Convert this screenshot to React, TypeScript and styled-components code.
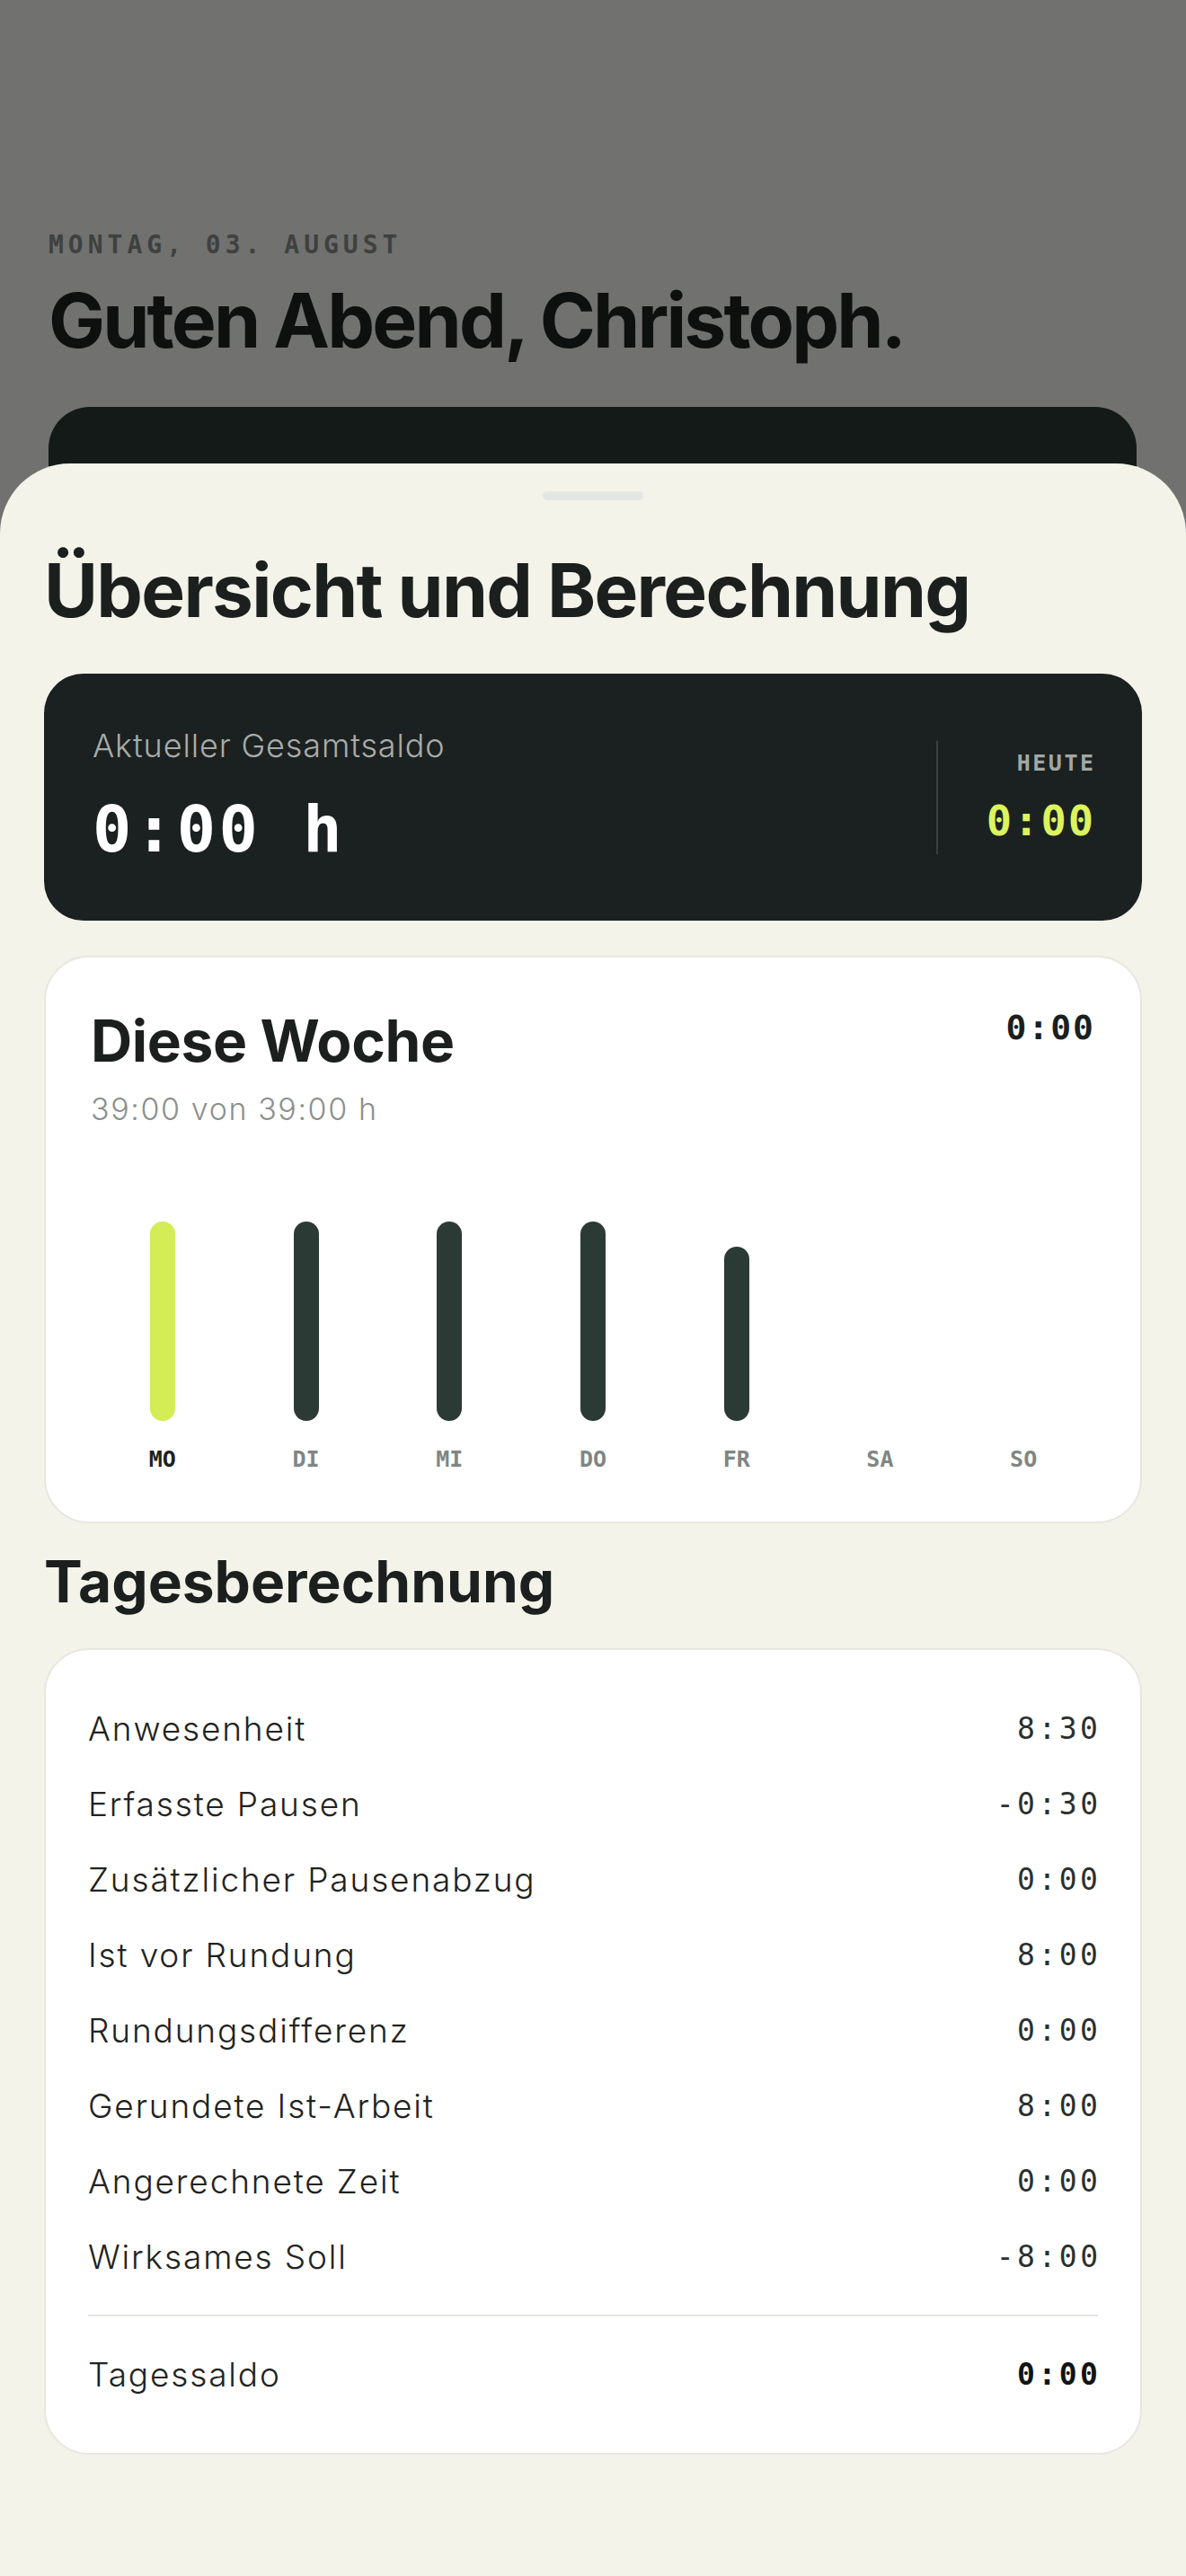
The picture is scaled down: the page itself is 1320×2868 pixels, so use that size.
import React from 'react';
import styled, {createGlobalStyle} from 'styled-components';

const GlobalStyle = createGlobalStyle`
  html, body {
    margin: 0;
    padding: 0;
  }
  body {
    background: #717170;
    font-family: Inter, "Noto Sans", sans-serif;
  }
  * {
    box-sizing: border-box;
  }
`;

const MONO = `"DejaVu Sans Mono", "Liberation Mono", monospace`;

type Day = { label: string, hours: number, today?: boolean };

const week: Day[] = [
    {label: 'MO', hours: 8, today: true},
    {label: 'DI', hours: 8},
    {label: 'MI', hours: 8},
    {label: 'DO', hours: 8},
    {label: 'FR', hours: 7},
    {label: 'SA', hours: 0},
    {label: 'SO', hours: 0},
];

const rows = [
    {label: 'Anwesenheit', value: '8:30'},
    {label: 'Erfasste Pausen', value: '-0:30'},
    {label: 'Zusätzlicher Pausenabzug', value: '0:00'},
    {label: 'Ist vor Rundung', value: '8:00'},
    {label: 'Rundungsdifferenz', value: '0:00'},
    {label: 'Gerundete Ist-Arbeit', value: '8:00'},
    {label: 'Angerechnete Zeit', value: '0:00'},
    {label: 'Wirksames Soll', value: '-8:00'},
];

const MAX_BAR = 222;

export default function App() {
    return (
        <>
            <GlobalStyle/>
            <Screen>
                <Backdrop>
                    <DateLabel>MONTAG, 03. AUGUST</DateLabel>
                    <Greeting>Guten Abend, Christoph.</Greeting>
                    <BehindCard/>
                </Backdrop>

                <Sheet>
                    <Handle/>
                    <SheetTitle>Übersicht und Berechnung</SheetTitle>

                    <BalanceCard>
                        <BalanceMain>
                            <BalanceLabel>Aktueller Gesamtsaldo</BalanceLabel>
                            <BalanceValue>0:00 h</BalanceValue>
                        </BalanceMain>
                        <VDivider/>
                        <TodayBlock>
                            <TodayLabel>HEUTE</TodayLabel>
                            <TodayValue>0:00</TodayValue>
                        </TodayBlock>
                    </BalanceCard>

                    <WeekCard>
                        <WeekHeader>
                            <div>
                                <CardTitle>Diese Woche</CardTitle>
                                <WeekSub>39:00 von 39:00 h</WeekSub>
                            </div>
                            <WeekTotal>0:00</WeekTotal>
                        </WeekHeader>
                        <Chart>
                            {week.map(d => (
                                <DayColumn key={d.label}>
                                    <BarTrack>
                                        {d.hours > 0 &&
                                            <Bar today={!!d.today} style={{height: (d.hours / 8) * MAX_BAR}}/>}
                                    </BarTrack>
                                    <DayLabel today={!!d.today}>{d.label}</DayLabel>
                                </DayColumn>
                            ))}
                        </Chart>
                    </WeekCard>

                    <SectionTitle>Tagesberechnung</SectionTitle>

                    <CalcCard>
                        {rows.map(r => (
                            <CalcRow key={r.label}>
                                <CalcLabel>{r.label}</CalcLabel>
                                <CalcValue>{r.value}</CalcValue>
                            </CalcRow>
                        ))}
                        <TotalRow>
                            <CalcLabel>Tagessaldo</CalcLabel>
                            <CalcValue strong>0:00</CalcValue>
                        </TotalRow>
                    </CalcCard>
                </Sheet>
            </Screen>
        </>
    );
}

const Screen = styled.div`
  position: relative;
  height: 2868px;
  overflow: hidden;
  background: #717170;
`

const Backdrop = styled.div`
  padding: 256px 55px 0 54px;
`

const DateLabel = styled.div`
  font-family: ${MONO};
  font-size: 28px;
  line-height: 1.2;
  font-weight: 700;
  letter-spacing: 5px;
  color: #3e413f;
`

const Greeting = styled.h1`
  margin: 21px 0 0;
  font-family: Inter, sans-serif;
  font-size: 84px;
  line-height: 1.1;
  font-weight: 700;
  letter-spacing: -0.034em;
  color: #0e100f;
`

const BehindCard = styled.div`
  margin-top: 50px;
  height: 300px;
  border-radius: 46px;
  background: #131a18;
`

const Sheet = styled.div`
  position: absolute;
  top: 516px;
  left: 0;
  right: 0;
  bottom: 0;
  padding: 31px 49px 0 49px;
  border-radius: 78px 78px 0 0;
  background: #f3f3ea;
  display: flex;
  flex-direction: column;
`

const Handle = styled.div`
  align-self: center;
  width: 112px;
  height: 10px;
  border-radius: 6px;
  background: #e4e6e2;
`

const SheetTitle = styled.h2`
  margin: 56px 0 0;
  font-size: 82px;
  line-height: 1.1;
  font-weight: 700;
  letter-spacing: -0.021em;
  color: #1b1f1e;
`

const BalanceCard = styled.div`
  margin-top: 47px;
  height: 275px;
  border-radius: 44px;
  background: #1b2020;
  padding: 0 54px;
  display: flex;
  align-items: center;
`

const BalanceMain = styled.div`
  flex: 1;
  display: flex;
  flex-direction: column;
  gap: 32px;
  margin-top: -4px;
`

const BalanceLabel = styled.div`
  font-size: 36px;
  line-height: 1.2;
  font-weight: 300;
  letter-spacing: 0.024em;
  color: #a7aca9;
`

const BalanceValue = styled.div`
  font-family: ${MONO};
  font-size: 72px;
  line-height: 1.1;
  font-weight: 700;
  letter-spacing: 3.5px;
  color: #ffffff;
`

const VDivider = styled.div`
  width: 2px;
  height: 126px;
  background: #3a403f;
`

const TodayBlock = styled.div`
  width: 173px;
  display: flex;
  flex-direction: column;
  align-items: flex-end;
  gap: 24px;
`

const TodayLabel = styled.div`
  font-family: ${MONO};
  font-size: 25px;
  line-height: 1.1;
  font-weight: 700;
  letter-spacing: 2.5px;
  margin-right: -2.5px;
  color: #a1a8a4;
`

const TodayValue = styled.div`
  font-family: ${MONO};
  font-size: 47px;
  line-height: 1.1;
  font-weight: 700;
  letter-spacing: 2px;
  margin-right: -2px;
  color: #dcf35e;
`

const WeekCard = styled.div`
  margin-top: 39px;
  border: 2px solid #e7e7e0;
  border-radius: 50px;
  background: #ffffff;
  padding: 58px 50px 57px;
`

const WeekHeader = styled.div`
  display: flex;
  justify-content: space-between;
  align-items: flex-start;
`

const CardTitle = styled.div`
  font-size: 64px;
  line-height: 1.1;
  font-weight: 700;
  letter-spacing: -0.006em;
  color: #1b1f1e;
`

const WeekSub = styled.div`
  margin-top: 20px;
  font-size: 34px;
  line-height: 1.2;
  font-weight: 300;
  letter-spacing: 0.047em;
  color: #8b908d;
`

const WeekTotal = styled.div`
  font-family: ${MONO};
  font-size: 38px;
  line-height: 1.1;
  font-weight: 700;
  letter-spacing: 2px;
  color: #1b1f1e;
`

const Chart = styled.div`
  margin-top: 105px;
  display: grid;
  grid-template-columns: repeat(7, 1fr);
`

const DayColumn = styled.div`
  display: flex;
  flex-direction: column;
  align-items: center;
`

const BarTrack = styled.div`
  height: ${MAX_BAR}px;
  display: flex;
  align-items: flex-end;
`

const Bar = styled.div<{ today: boolean }>`
  width: 28px;
  border-radius: 14px;
  background: ${p => p.today ? '#d4ec55' : '#2c3a35'};
`

const DayLabel = styled.div<{ today: boolean }>`
  margin-top: 30px;
  font-family: ${MONO};
  font-size: 25px;
  line-height: 1;
  font-weight: 700;
  color: ${p => p.today ? '#1d2220' : '#7f8682'};
`

const SectionTitle = styled.h2`
  margin: 30px 0 0;
  font-size: 64px;
  line-height: 1.1;
  font-weight: 700;
  letter-spacing: 0;
  color: #1b1f1e;
`

const CalcCard = styled.div`
  margin-top: 38px;
  border: 2px solid #e7e7e0;
  border-radius: 50px;
  background: #ffffff;
  padding: 46px 47px 46px;
`

const CalcRow = styled.div`
  height: 84px;
  display: flex;
  align-items: center;
  justify-content: space-between;
`

const TotalRow = styled(CalcRow)`
  margin-top: 22px;
  padding-top: 24px;
  height: 108px;
  border-top: 2px solid #e3e5e1;
`

const CalcLabel = styled.span`
  font-size: 37px;
  line-height: 1.2;
  font-weight: 300;
  letter-spacing: 0.05em;
  color: #1f2321;
`

const CalcValue = styled.span<{ strong?: boolean }>`
  font-family: ${MONO};
  font-size: 33px;
  line-height: 1.2;
  font-weight: ${p => p.strong ? 700 : 400};
  letter-spacing: 3.5px;
  margin-right: -3.5px;
  color: ${p => p.strong ? '#111413' : '#2b302e'};
`
